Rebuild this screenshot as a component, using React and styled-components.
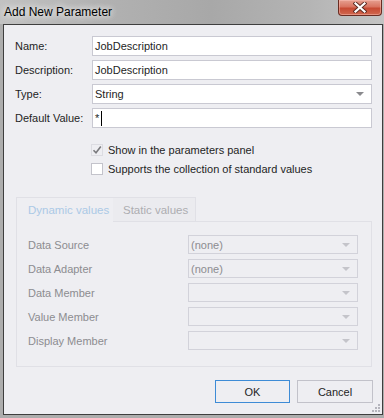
import React from 'react';
import styled, { createGlobalStyle } from 'styled-components';

const Global = createGlobalStyle`
  html, body { margin: 0; padding: 0; }
  body {
    width: 384px; height: 418px; overflow: hidden;
    font-family: "Liberation Sans", Arial, sans-serif;
    font-size: 11px;
    color: #1e1e1e;
  }
`;

const Window = styled.div`
  width: 384px; height: 418px;
  display: flex; flex-direction: column;
  background: #adadad;
`;

const TitleBar = styled.div`
  height: 24px;
  display: flex; align-items: flex-start; justify-content: space-between;
  padding-right: 2px;
  background: linear-gradient(to right, #c2c2c2 0%, #b2b2b2 25%, #a8a8a8 55%, #b4b4b4 80%, #c4c4c4 100%);
`;

const Title = styled.div`
  font-size: 12px;
  line-height: 12px;
  margin: 6px 0 0 4px;
  color: #000;
  text-shadow: 0 0 6px rgba(255,255,255,0.95), 0 0 10px rgba(255,255,255,0.8);
`;

const CloseButton = styled.div`
  width: 44px; height: 16px;
  box-sizing: border-box;
  border: 1px solid #6a2c22;
  border-top: none;
  border-radius: 0 0 4px 4px;
  background: linear-gradient(#e6a090 0%, #d97461 45%, #c74a33 55%, #d0684f 100%);
  box-shadow: inset 0 0 0 1px rgba(255,200,190,0.45);
  display: flex; align-items: center; justify-content: center;
`;

const Frame = styled.div`
  flex: 1;
  display: flex;
  padding: 0 2px 3px 3px;
`;

const Client = styled.div`
  position: relative;
  flex: 1;
  display: flex; flex-direction: column;
  border: 1px solid #3e3e3e;
  background: #eeeef2;
`;

const Form = styled.div`
  display: grid;
  grid-template-columns: 77px 1fr;
  row-gap: 4px;
  padding: 11px 10px 0 11px;
`;

const Label = styled.div`
  align-self: center;
  color: ${p => (p.$disabled ? '#8c8c90' : '#1e1e1e')};
  white-space: nowrap;
`;

const Field = styled.div`
  position: relative;
  height: ${p => p.$h || 20}px;
  box-sizing: border-box;
  border: 1px solid ${p => (p.$disabled ? '#d2d2da' : '#c9c9d2')};
  background: ${p => (p.$disabled ? '#eeeef2' : '#fff')};
  color: ${p => (p.$disabled ? '#8c8c90' : '#1e1e1e')};
  display: flex; align-items: center;
  padding-left: 2px;
`;

const Arrow = styled.span`
  position: absolute;
  right: 7px; top: 50%;
  margin-top: -2px;
  width: 0; height: 0;
  border-left: 4px solid transparent;
  border-right: 4px solid transparent;
  border-top: 4px solid ${p => (p.$disabled ? '#c4c4ca' : '#8a8a8e')};
`;

const Caret = styled.span`
  display: inline-block;
  width: 1px; height: 15px;
  background: #000;
  margin-left: 2px;
`;

const Checks = styled.div`
  display: flex; flex-direction: column;
  margin-top: 12px;
  padding-left: 87px;
`;

const CheckRow = styled.div`
  height: 19px;
  display: flex; align-items: center; gap: 5px;
`;

const Box = styled.span`
  width: 12px; height: 12px;
  box-sizing: border-box;
  border: 1px solid ${p => (p.$checked ? '#dcdce2' : '#c3c3cb')};
  background: ${p => (p.$checked ? '#eeeef2' : '#fff')};
  display: flex; align-items: center; justify-content: center;
`;

const Tabs = styled.div`
  margin: 19px 10px 0 12px;
  display: flex; flex-direction: column;
`;

const TabHeader = styled.div`
  display: flex;
  height: 25px;
`;

const Tab = styled.div`
  width: ${p => p.$w}px;
  box-sizing: border-box;
  padding-left: ${p => p.$pad}px;
  display: flex; align-items: center;
  border-top: 1px solid #e0e0e6;
  border-left: ${p => (p.$active ? '1px solid #e0e0e6' : 'none')};
  border-right: ${p => (p.$active ? 'none' : '1px solid #e0e0e6')};
  border-bottom: ${p => (p.$active ? 'none' : '1px solid #e0e0e6')};
  background: ${p => (p.$active ? '#eeeef2' : '#ebebef')};
  color: ${p => (p.$active ? '#abc9e6' : '#adadb1')};
  font-size: 11.5px;
`;

const TabFill = styled.div`
  flex: 1;
  border-bottom: 1px solid #e0e0e6;
`;

const Panel = styled.div`
  display: grid;
  grid-template-columns: 160px 170px;
  row-gap: 5px;
  padding: 13px 13px 16px 11px;
  border: 1px solid #e0e0e6;
  border-top: none;
`;

const Buttons = styled.div`
  display: flex; justify-content: flex-end; gap: 7px;
  margin-top: 13px;
  padding-right: 9px;
`;

const Button = styled.div`
  width: ${p => p.$w}px; height: 23px;
  box-sizing: border-box;
  border: 1px solid ${p => (p.$primary ? '#3d8bd6' : '#c2c2ca')};
  background: #eeeef2;
  color: #1e1e1e;
  display: flex; align-items: center; justify-content: center;
`;

const Grip = styled.svg`
  position: absolute;
  right: 2px; bottom: 2px;
`;

const CheckMark = () => (
  <svg width="10" height="10" viewBox="0 0 10 10">
    <path d="M1.5 5.2 L4 7.8 L8.8 1.5" fill="none" stroke="#7a7a7e" strokeWidth="1.6" />
  </svg>
);

const XIcon = () => (
  <svg width="14" height="11" viewBox="0 0 14 11">
    <path d="M2.5 1.5 L11.5 9.5 M11.5 1.5 L2.5 9.5" stroke="#5a2a22" strokeWidth="4" strokeLinecap="square" />
    <path d="M2.5 1.5 L11.5 9.5 M11.5 1.5 L2.5 9.5" stroke="#fff" strokeWidth="2.2" strokeLinecap="square" />
  </svg>
);

const dynamicRows = [
  ['Data Source', '(none)'],
  ['Data Adapter', '(none)'],
  ['Data Member', ''],
  ['Value Member', ''],
  ['Display Member', ''],
];

export default function App() {
  return (
    <>
      <Global />
      <Window>
        <TitleBar>
          <Title>Add New Parameter</Title>
          <CloseButton><XIcon /></CloseButton>
        </TitleBar>
        <Frame>
          <Client>
            <Form>
              <Label>Name:</Label>
              <Field>JobDescription</Field>
              <Label>Description:</Label>
              <Field>JobDescription</Field>
              <Label>Type:</Label>
              <Field>String<Arrow /></Field>
              <Label>Default Value:</Label>
              <Field>*<Caret /></Field>
            </Form>
            <Checks>
              <CheckRow><Box $checked><CheckMark /></Box>Show in the parameters panel</CheckRow>
              <CheckRow><Box />Supports the collection of standard values</CheckRow>
            </Checks>
            <Tabs>
              <TabHeader>
                <Tab $active $w={97} $pad={11}>Dynamic values</Tab>
                <Tab $w={83} $pad={10}>Static values</Tab>
                <TabFill />
              </TabHeader>
              <Panel>
                {dynamicRows.map(([label, value]) => (
                  <React.Fragment key={label}>
                    <Label $disabled>{label}</Label>
                    <Field $disabled $h={19}>{value}<Arrow $disabled /></Field>
                  </React.Fragment>
                ))}
              </Panel>
            </Tabs>
            <Buttons>
              <Button $primary $w={75}>OK</Button>
              <Button $w={76}>Cancel</Button>
            </Buttons>
            <Grip width="8" height="8" viewBox="0 0 8 8">
              {[[6, 0], [6, 3], [3, 3], [6, 6], [3, 6], [0, 6]].map(([x, y]) => (
                <rect key={`${x}-${y}`} x={x} y={y} width="2" height="2" fill="#b4b4bc" />
              ))}
            </Grip>
          </Client>
        </Frame>
      </Window>
    </>
  );
}
